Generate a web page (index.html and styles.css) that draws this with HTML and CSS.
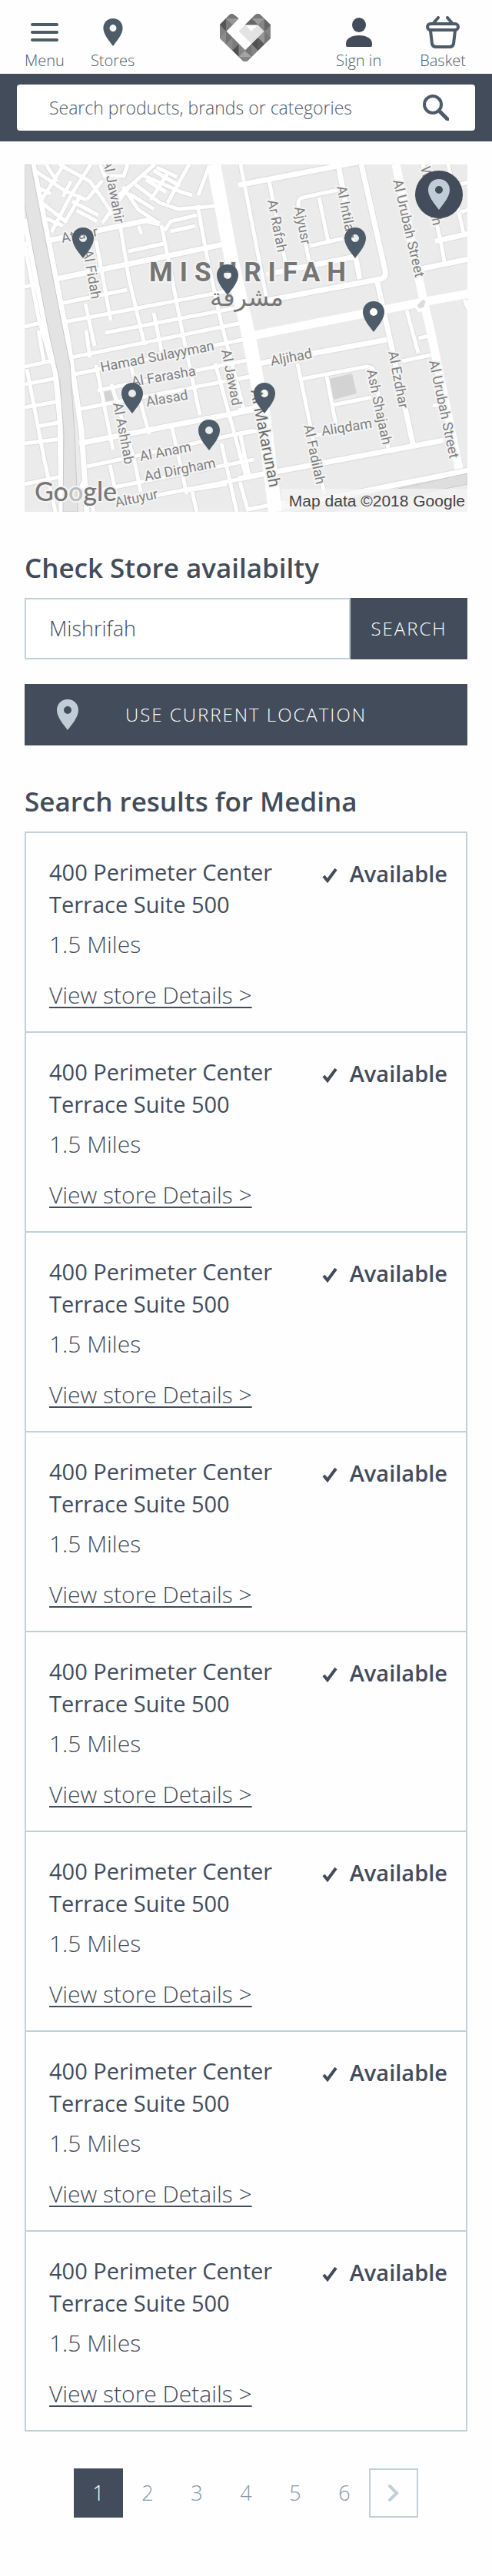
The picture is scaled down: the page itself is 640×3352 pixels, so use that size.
FILE: index.html
```html
<!DOCTYPE html>
<html lang="en">
  <head>
    <meta charset="UTF-8" />
    <meta name="viewport" content="width=device-width, initial-scale=1.0" />
    <title>Store Availability</title>
    <link rel="stylesheet" href="styles.css">
  </head>
  <body>
    <!-- Shared icons -->
    <svg class="sprite" aria-hidden="true">
      <symbol id="pin" viewBox="0 0 28 40">
        <path fill-rule="evenodd" d="M14 0C6 0 0 6 0 14c0 9 8 18 14 26 6-8 14-17 14-26C28 6 22 0 14 0zM14 9a5 5 0 1 1 0 10 5 5 0 0 1 0-10z" />
      </symbol>
      <symbol id="check" viewBox="0 0 20 20">
        <path d="M2 11l5 6L18 2" fill="none" stroke="currentColor" stroke-width="4" />
      </symbol>
    </svg>

    <header class="header">
      <nav class="nav">
        <a class="nav-item" href="#">
          <svg class="nav-icon" width="36" height="44" viewBox="0 0 36 44">
            <path d="M2 12h32M2 22h32M2 32h32" fill="none" stroke="currentColor" stroke-width="4" stroke-linecap="round" />
          </svg>
          <span>Menu</span>
        </a>
        <a class="nav-item" href="#">
          <svg class="nav-icon" width="26" height="36"><use href="#pin" /></svg>
          <span>Stores</span>
        </a>
      </nav>
      <a class="logo" href="#" aria-label="Home">
        <svg width="66" height="62" viewBox="54 54 198 186">
          <clipPath id="heart">
            <path d="M54 95L91 58q8-8 18 0l19 14-48 50 73 74 74-74-25-25h-49l39-40q10-6 20 0l40 40v53l-90 88q-9 5-18 0l-90-88z" />
          </clipPath>
          <path d="M153 97l-25 25 50 50 49-50-25-25-25 25z" fill="#e3e3e3" />
          <path d="M178 72L153 97h49z" fill="#6a6a6a" />
          <g clip-path="url(#heart)">
            <path d="M54 54h198v186H54z" fill="#7b7b7b" />
            <path d="M54 97l24-25v50z" fill="#555" />
            <path d="M78 72l25-22 25 22z" fill="#747474" />
            <path d="M78 72h50l-25 25z" fill="#979797" />
            <path d="M54 97l24 25-24 26z" fill="#818181" />
            <path d="M54 148l24-26v50z" fill="#8c8c8c" />
            <path d="M78 122l25 25-25 25z" fill="#737373" />
            <path d="M103 147v50l-25-25z" fill="#8a8a8a" />
            <path d="M128 172v50l-25-25z" fill="#505050" />
            <path d="M128 172l25 25-25 25z" fill="#858585" />
            <path d="M153 197l25 25h-50z" fill="#a5a5a5" />
            <path d="M128 222h50l-25 25z" fill="#858585" />
            <path d="M178 172v50l-25-25z" fill="#747474" />
            <path d="M178 172l25 25-25 25z" fill="#858585" />
            <path d="M203 147v50l-25-25z" fill="#4f4f4f" />
            <path d="M203 147l25 25-25 25z" fill="#5a5a5a" />
            <path d="M228 122v50l-25-25z" fill="#969696" />
            <path d="M228 122l25 26-25 24z" fill="#777" />
            <path d="M252 97v51l-24-26z" fill="#858585" />
            <path d="M228 72v50l25-25z" fill="#666" />
            <path d="M203 97l25-25v50z" fill="#858585" />
            <path d="M178 72h50l-25 25z" fill="#9b9b9b" />
            <path d="M178 72l25-22 25 22z" fill="#777" />
            <path d="M178 72l25 25h-50z" fill="#666" />
          </g>
        </svg>
      </a>
      <nav class="nav nav-right">
        <a class="nav-item" href="#">
          <svg class="nav-icon dark" width="34" height="38" viewBox="0 0 34 38">
            <ellipse cx="17" cy="9.500" rx="9" ry="9.500" />
            <path d="M0 34c0-7 7-11 17-11s17 4 17 11v2q0 2-2 2H2q-2 0-2-2z" />
          </svg>
          <span>Sign in</span>
        </a>
        <a class="nav-item" href="#">
          <svg class="nav-icon" width="44" height="42" viewBox="0 0 44 42">
            <g fill="none" stroke="currentColor" stroke-width="4" stroke-linecap="round">
              <path d="M10 9l6-7M34 9l-6-7" />
              <rect x="2" y="10" width="40" height="8" rx="4" />
              <path d="M6 19l2 17q1 4 5 4h18q4 0 5-4l2-17" />
            </g>
          </svg>
          <span>Basket</span>
        </a>
      </nav>
    </header>

    <div class="search-bar">
      <form class="search-box">
        <input type="text" aria-label="Search products" placeholder="Search products, brands or categories" />
        <button type="button" aria-label="Search">
          <svg width="34" height="34" viewBox="0 0 34 34">
            <g fill="none" stroke="currentColor" stroke-linecap="round">
              <circle cx="13" cy="13" r="11" stroke-width="4" />
              <path d="M23 23l9 9" stroke-width="5" />
            </g>
          </svg>
        </button>
      </form>
    </div>

    <main class="container">
      <!-- Store map -->
      <div class="map">
        <svg class="map-canvas" viewBox="32 214 576 452" role="img" aria-label="Map of Mishrifah">
          <defs>
            <g id="small-roads">
              <path d="M44 221l40 27 28 12M52 262l32 25M77 214l40 22 16 22 14 22M53 262l30-48M67 302l24-46 27-42M84 290l21-36M60 284l22 10M92 236l-10 20M44 242l22 10M60 214l14 22M94 262l34 18M100 274l26 14M130 214l6 15 25 0 5-15M113 260l20-25" />
              <path d="M133 290l35-47 33-29M160 243l20 30 26 17M168 252l32 20M176 240l32 24 24 8 48-4M186 228l50 22 14 4M218 264l28-50M230 230l-26-12M216 250l-26-16M258 254l14-38M146 262l22-20M200 222l34 20M196 260l22-34" />
              <path d="M180 294l4 10M214 300l8-12 34-8M222 301l32-7M167 327l46-10M125 313l8 44 11 60M157 297l10 62 21 90M210 293l8 40 19 98 23 109M257 267l12 66 18 84 30 115M78 395l87-18M84 419l226-43M137 433l173-33M111 395l12 55M200 407l10 50" />
              <path d="M93 465l227-46M97 487l223-46M127 508l198-40M100 533l225-43M113 607l217-47M118 640l212-42M150 655l180-35M145 500l30 100 8 40M125 475l22 110M170 475l24 90M280 473l40 147M223 553l20 90M143 605l12 55M112 430l5 35M288 577l20 89M250 640l6 26M245 638l50-8" />
              <path d="M32 317l18 96 17 60M32 317l12-2M32 373l24-5M32 425l28-7M32 477l38-8M32 500l42-8M32 530l46-8M48 555l32-6M32 577l48-6M50 430l7 40M35 480l23 120 14 66M32 630l48-10M90 666l20-42 12 42" />
              <path d="M350 235l22 110M440 247l-46 10q-7 2-6 10l14 73M415 257l12 58M403 320l54-12M313 214l34 176M550 214l23 99 5 27M583 214l20 90M594 241l16-4M594 277l16-4M529 404l15 55M545 440l18-4M604 390l6 14" />
              <path d="M387 473l35 170M393 493l84-16q9 0 10 8l18 98M425 490l12 63M433 527l50-10M523 470l37-8M563 528l12-2M310 493l16-3M310 534l30-6M310 565l28-5M313 567l11 52M310 594l8-2M312 627l10 36 50-10M410 567l14-3" />
            </g>
            <g id="mid-roads">
              <path d="M43 214l20 99 25 127 18 120 7 106M60 430l12 55 6 60 2 121M32 285l28 145M63 313l127-26 18 4M73 363l217-45M103 577l227-44M310 241l160-31M470 214l31 138q2 9-6 11l-148 28M490 363l47 214M440 214l28 149M347 357l115-23M547 350l63-13M566 314l44-10M337 473l166-31M310 623l267-50" />
              <path d="M367 660l243-48" />
            </g>
          </defs>
          <path d="M32 214h578v452H32z" fill="#ebebeb" />
          <path d="M428 493l30-7 6 26-30 8z" fill="#d3d3d3" />
          <path d="M129 511l17-3 3 15-17 3z" fill="#d3d3d3" />
          <g class="roads casing">
            <use class="thin" href="#small-roads" />
            <use class="mid" href="#mid-roads" />
          </g>
          <g class="roads">
            <use class="thin" href="#small-roads" />
            <use class="mid" href="#mid-roads" />
            <path class="wide" d="M278 214l22 119 22 97 21 110 15 126" />
            <path class="big" d="M515 214l35 173 10 43 37 180M322 438l228-45 60-11" />
          </g>
          <path d="M550 387l6 4-3 10-8 3-5-7z" fill="#dcdcdc" stroke="#fff" stroke-width="4" />
          <path d="M32 214h8l44 226 7 33 6 90 4 103H82l1-103-5-66-15-67-31-163z" fill="#e3e3e3" stroke="#c9c9c9" />
          <path d="M430 666l178-36v-14l-225 50z" fill="#dedede" stroke="#c9c9c9" />

          <g class="street">
            <text transform="translate(134 209) rotate(79)">Al Jawahir</text>
            <text transform="translate(81 316) rotate(-11)">Atjabr</text>
            <text transform="translate(108 326) rotate(80)">Al Fidah</text>
            <text transform="translate(348 261) rotate(79)">Ar Rafah</text>
            <text transform="translate(383 270) rotate(79)">Ajyusr</text>
            <text transform="translate(438 243) rotate(79)">Al Intilaq</text>
            <text transform="translate(511 235) rotate(77)">Al Urubah Street</text>
            <text transform="translate(547 218) rotate(78)">Wadhiyah</text>
            <text transform="translate(132 484) rotate(-11)">Hamad Sulayyman</text>
            <text transform="translate(172 503) rotate(-10)">Al Farasha</text>
            <text transform="translate(191 529) rotate(-10)">Alasad</text>
            <text transform="translate(147 525) rotate(79)">Al Ashhab</text>
            <text transform="translate(183 600) rotate(-11)">Al Anam</text>
            <text transform="translate(189 626) rotate(-11)">Ad Dirgham</text>
            <text transform="translate(151 660) rotate(-12)">Altuyur</text>
            <text transform="translate(288 456) rotate(79)">Al Jawad</text>
            <text transform="translate(353 476) rotate(-11)">Aljihad</text>
            <text transform="translate(395 554) rotate(78)">Al Fadilah</text>
            <text transform="translate(419 567) rotate(-9)">Aliqdam</text>
            <text transform="translate(477 482) rotate(78)">Ash Shajaah</text>
            <text transform="translate(505 458) rotate(79)">Al Ezdhar</text>
            <text transform="translate(558 470) rotate(78)">Al Urubah Street</text>
            <text class="avenue" transform="translate(326 508) rotate(79)">Al Makarunah</text>
          </g>
          <text class="district" x="194" y="366">MISHRIFAH</text>
          <text class="district-ar" x="321" y="398">مشرفة</text>
          <text class="google" x="45" y="652">Go<tspan class="faded">o</tspan>gle</text>
          <path d="M366 636h244v30H366z" fill="#f5f5f5" opacity="0.7" />
          <text class="copyright" x="605" y="659">Map data ©2018 Google</text>

          <g class="pins">
            <use href="#pin" x="94" y="296" width="28" height="40" />
            <use href="#pin" x="282" y="344" width="28" height="40" />
            <use href="#pin" x="448" y="296" width="28" height="40" />
            <use href="#pin" x="472" y="392" width="28" height="40" />
            <use href="#pin" x="158" y="498" width="28" height="40" />
            <use href="#pin" x="258" y="546" width="28" height="40" />
            <use href="#pin" x="330" y="498" width="28" height="40" />
          </g>
        </svg>
        <button class="locate" type="button" aria-label="Locate me">
          <svg width="28" height="40"><use href="#pin" /></svg>
        </button>
      </div>

      <h2 class="title">Check Store availabilty</h2>
      <form class="store-search">
        <input type="text" aria-label="Location" value="Mishrifah" />
        <button class="button" type="button">SEARCH</button>
      </form>
      <button class="button current" type="button">
        <svg class="current-icon" width="28" height="40"><use href="#pin" /></svg>
        USE CURRENT LOCATION
      </button>

      <!-- Results -->
      <h2 class="title">Search results for Medina</h2>
      <ul class="results">
        <li class="store">
          <div>
            <h3>400 Perimeter Center<br />Terrace Suite 500</h3>
            <p>1.5 Miles</p>
            <a href="#">View store Details &gt;</a>
          </div>
          <div class="status"><svg width="20" height="20"><use href="#check" /></svg>Available</div>
        </li>
        <li class="store">
          <div>
            <h3>400 Perimeter Center<br />Terrace Suite 500</h3>
            <p>1.5 Miles</p>
            <a href="#">View store Details &gt;</a>
          </div>
          <div class="status"><svg width="20" height="20"><use href="#check" /></svg>Available</div>
        </li>
        <li class="store">
          <div>
            <h3>400 Perimeter Center<br />Terrace Suite 500</h3>
            <p>1.5 Miles</p>
            <a href="#">View store Details &gt;</a>
          </div>
          <div class="status"><svg width="20" height="20"><use href="#check" /></svg>Available</div>
        </li>
        <li class="store">
          <div>
            <h3>400 Perimeter Center<br />Terrace Suite 500</h3>
            <p>1.5 Miles</p>
            <a href="#">View store Details &gt;</a>
          </div>
          <div class="status"><svg width="20" height="20"><use href="#check" /></svg>Available</div>
        </li>
        <li class="store">
          <div>
            <h3>400 Perimeter Center<br />Terrace Suite 500</h3>
            <p>1.5 Miles</p>
            <a href="#">View store Details &gt;</a>
          </div>
          <div class="status"><svg width="20" height="20"><use href="#check" /></svg>Available</div>
        </li>
        <li class="store">
          <div>
            <h3>400 Perimeter Center<br />Terrace Suite 500</h3>
            <p>1.5 Miles</p>
            <a href="#">View store Details &gt;</a>
          </div>
          <div class="status"><svg width="20" height="20"><use href="#check" /></svg>Available</div>
        </li>
        <li class="store">
          <div>
            <h3>400 Perimeter Center<br />Terrace Suite 500</h3>
            <p>1.5 Miles</p>
            <a href="#">View store Details &gt;</a>
          </div>
          <div class="status"><svg width="20" height="20"><use href="#check" /></svg>Available</div>
        </li>
        <li class="store">
          <div>
            <h3>400 Perimeter Center<br />Terrace Suite 500</h3>
            <p>1.5 Miles</p>
            <a href="#">View store Details &gt;</a>
          </div>
          <div class="status"><svg width="20" height="20"><use href="#check" /></svg>Available</div>
        </li>
      </ul>

      <nav class="pagination" aria-label="Pages">
        <a class="active" href="#">1</a>
        <a href="#">2</a>
        <a href="#">3</a>
        <a href="#">4</a>
        <a href="#">5</a>
        <a href="#">6</a>
        <a class="next" href="#" aria-label="Next">
          <svg width="14" height="22" viewBox="0 0 14 22">
            <path d="M2 2l9 9-9 9" fill="none" stroke="currentColor" stroke-width="4" stroke-linecap="round" />
          </svg>
        </a>
      </nav>
    </main>
  </body>
</html>
```
FILE: styles.css
```css
* {
  box-sizing: border-box;
}
body {
  margin: 0;
  background: #fefefe;
  color: #434c5a;
  font-family: "Open Sans", sans-serif;
  font-size: 27px;
  font-weight: 300;
  line-height: 42px;
}
a {
  color: inherit;
}
input,
button {
  font: inherit;
  color: inherit;
  border: none;
  border-radius: 0;
  margin: 0;
  padding: 0;
  outline: none;
}
button {
  cursor: pointer;
}
svg {
  display: block;
  fill: currentColor;
}
.sprite {
  display: none;
}

/* Header */
.header {
  display: grid;
  grid-template-columns: 1fr auto 1fr;
  height: 96px;
  padding: 18px 34px 0 32px;
  color: #4e5b68;
}
.nav {
  display: flex;
  gap: 34px;
}
.nav-right {
  justify-content: flex-end;
  gap: 50px;
}
.nav-item {
  display: grid;
  grid-template-rows: 48px 26px;
  place-items: center;
  font-size: 20px;
  line-height: 26px;
  text-decoration: none;
}
.dark {
  color: #434c5a;
}

/* Product search */
.search-bar {
  padding: 14px 22px;
  background: #434c5a;
}
.search-box {
  display: flex;
  align-items: center;
  height: 60px;
  padding: 0 34px 0 42px;
  background: #fff;
  border-radius: 4px;
  color: #4e5b68;
}
.search-box input {
  flex: 1;
  min-width: 0;
  background: none;
  font-size: 23px;
}
.search-box input::placeholder {
  color: #4e5b68;
  opacity: 1;
}
.search-box button {
  background: none;
}

.container {
  padding: 30px 32px 76px;
}

/* Map */
.map {
  position: relative;
  background: #ebebeb;
  font-family: Roboto, sans-serif;
}
.map-canvas {
  width: 100%;
  height: auto;
}
.roads {
  fill: none;
  stroke: #fff;
}
.casing {
  stroke: #dcdcdc;
}
.thin {
  stroke-width: 5px;
}
.mid {
  stroke-width: 7px;
}
.wide {
  stroke-width: 18px;
}
.big {
  stroke-width: 11px;
}
.casing .thin {
  stroke-width: 7px;
}
.casing .mid {
  stroke-width: 9px;
}
.street {
  font-size: 18px;
  font-weight: 400;
  fill: #808080;
  stroke: #f4f4f4;
  stroke-width: 4px;
  paint-order: stroke;
}
.avenue {
  font-size: 21px;
  fill: #6c6c6c;
}
.district {
  font-size: 35px;
  font-weight: 700;
  letter-spacing: 9px;
  fill: #757575;
  stroke: #f4f4f4;
  stroke-width: 4px;
  paint-order: stroke;
}
.district-ar {
  font-family: "DejaVu Sans", sans-serif;
  font-size: 32px;
  font-weight: 400;
  text-anchor: middle;
  fill: #757575;
}
.google {
  font-family: Lato, sans-serif;
  font-size: 34px;
  font-weight: 500;
  fill: #777;
  stroke: #f4f4f4;
  stroke-width: 4px;
  paint-order: stroke;
}
.faded {
  fill: #bbb;
}
.copyright {
  font-family: "Liberation Sans", sans-serif;
  font-size: 21px;
  font-weight: 400;
  text-anchor: end;
  fill: #444;
}
.pins {
  fill: #4e5b68;
}
.locate {
  position: absolute;
  top: 8px;
  right: 6px;
  display: flex;
  align-items: center;
  justify-content: center;
  width: 62px;
  height: 62px;
  border-radius: 50%;
  background: #434c5a;
  color: #c0cdd7;
}

/* Store search */
.title {
  margin: 51px 0 17px;
  font-size: 35px;
  font-weight: 600;
  line-height: 44px;
}
.store-search {
  display: flex;
  height: 80px;
  margin-bottom: 32px;
}
.store-search input {
  flex: 1;
  min-width: 0;
  padding: 0 30px;
  border: 2px solid #c2cfd6;
  background: #fff;
}
.button {
  height: 80px;
  background: #434c5a;
  color: #fff;
  font-size: 24px;
  letter-spacing: 2px;
}
.store-search .button {
  width: 152px;
}
.current {
  display: grid;
  grid-template-columns: 28px 1fr 28px;
  align-items: center;
  width: 100%;
  padding: 0 42px;
}
.current-icon {
  color: #c0cdd7;
}

/* Results list */
.results {
  list-style: none;
  margin: 0;
  padding: 0;
  border: 2px solid #c2cfd6;
  border-bottom: none;
}
.store {
  display: flex;
  justify-content: space-between;
  align-items: flex-start;
  padding: 30px 24px 26px 30px;
  border-bottom: 2px solid #c2cfd6;
  font-size: 30px;
}
.store h3 {
  margin: 0;
  font-size: 29px;
  font-weight: 400;
}
.store p {
  margin: 10px 0 24px;
}
.store a {
  display: block;
  text-decoration-thickness: 2px;
  text-underline-offset: 4px;
}
.status {
  display: flex;
  align-items: center;
  gap: 16px;
  padding-top: 2px;
  font-size: 29px;
  font-weight: 600;
}
.status svg {
  margin-top: 4px;
}

/* Pagination */
.pagination {
  display: flex;
  justify-content: center;
  margin-top: 48px;
}
.pagination a {
  display: flex;
  align-items: center;
  justify-content: center;
  width: 64px;
  height: 64px;
  color: #8c95a8;
  text-decoration: none;
}
.pagination .active {
  background: #434c5a;
  color: #fff;
}
.pagination .next {
  border: 2px solid #c2cfd6;
  color: #c2cfd6;
}
```
